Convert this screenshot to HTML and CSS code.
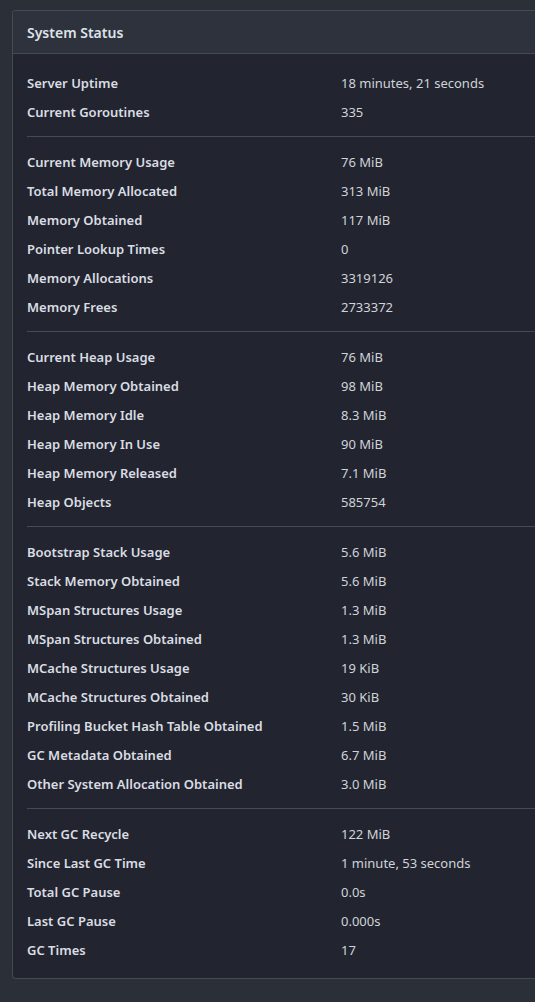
FILE: index.html
```html
<!DOCTYPE html>
<html>
<head>
<meta charset="utf-8">
<link rel="stylesheet" href="styles.css">
</head>
<body>
<div class="card">
  <div class="card-header">System Status</div>
  <div class="card-body">
    <dl class="section">
      <dt>Server Uptime</dt><dd>18 minutes, 21 seconds</dd>
      <dt>Current Goroutines</dt><dd>335</dd>
    </dl>
    <dl class="section">
      <dt>Current Memory Usage</dt><dd>76 MiB</dd>
      <dt>Total Memory Allocated</dt><dd>313 MiB</dd>
      <dt>Memory Obtained</dt><dd>117 MiB</dd>
      <dt>Pointer Lookup Times</dt><dd>0</dd>
      <dt>Memory Allocations</dt><dd>3319126</dd>
      <dt>Memory Frees</dt><dd>2733372</dd>
    </dl>
    <dl class="section">
      <dt>Current Heap Usage</dt><dd>76 MiB</dd>
      <dt>Heap Memory Obtained</dt><dd>98 MiB</dd>
      <dt>Heap Memory Idle</dt><dd>8.3 MiB</dd>
      <dt>Heap Memory In Use</dt><dd>90 MiB</dd>
      <dt>Heap Memory Released</dt><dd>7.1 MiB</dd>
      <dt>Heap Objects</dt><dd>585754</dd>
    </dl>
    <dl class="section">
      <dt>Bootstrap Stack Usage</dt><dd>5.6 MiB</dd>
      <dt>Stack Memory Obtained</dt><dd>5.6 MiB</dd>
      <dt>MSpan Structures Usage</dt><dd>1.3 MiB</dd>
      <dt>MSpan Structures Obtained</dt><dd>1.3 MiB</dd>
      <dt>MCache Structures Usage</dt><dd>19 KiB</dd>
      <dt>MCache Structures Obtained</dt><dd>30 KiB</dd>
      <dt>Profiling Bucket Hash Table Obtained</dt><dd>1.5 MiB</dd>
      <dt>GC Metadata Obtained</dt><dd>6.7 MiB</dd>
      <dt>Other System Allocation Obtained</dt><dd>3.0 MiB</dd>
    </dl>
    <dl class="section">
      <dt>Next GC Recycle</dt><dd>122 MiB</dd>
      <dt>Since Last GC Time</dt><dd>1 minute, 53 seconds</dd>
      <dt>Total GC Pause</dt><dd>0.0s</dd>
      <dt>Last GC Pause</dt><dd>0.000s</dd>
      <dt>GC Times</dt><dd>17</dd>
    </dl>
  </div>
</div>
</body>
</html>
```
FILE: styles.css
```css
html, body {
  margin: 0;
  padding: 0;
  overflow: hidden;
  background: #2b2f38;
}
body {
  font-family: "Noto Sans", "Open Sans", sans-serif;
  font-size: 13px;
  color: #d4d7dd;
  padding: 10px 0 0 12px;
  height: 1002px;
  box-sizing: border-box;
}
.card {
  width: 523px;
  box-sizing: border-box;
  border: 1px solid #454a56;
  border-right: none;
  border-radius: 4px 0 0 4px;
  background: #22252f;
}
.card-header {
  height: 43px;
  box-sizing: border-box;
  padding: 0 14px;
  display: flex;
  align-items: center;
  background: #2e323c;
  border-bottom: 1px solid #454a56;
  border-radius: 4px 0 0 0;
  font-weight: 600;
  font-size: 14px;
  color: #dfe2e8;
}
.card-body {
  padding: 14px 0 14px 14px;
}
.section {
  margin: 0;
  display: grid;
  grid-template-columns: 314px 1fr;
  grid-auto-rows: 29px;
  align-items: center;
}
.section + .section {
  border-top: 1px solid #454a56;
  margin-top: 10px;
  padding-top: 10px;
}
dt {
  font-weight: 600;
  color: #dadde3;
}
dd {
  margin: 0;
  color: #d0d3d9;
}
```
